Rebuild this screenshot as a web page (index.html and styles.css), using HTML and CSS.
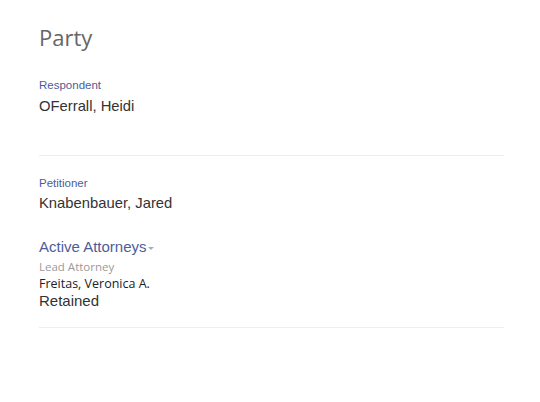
FILE: index.html
```html
<!DOCTYPE html>
<html>
<head>
<meta charset="utf-8">
<link rel="stylesheet" href="styles.css">
</head>
<body>
<div class="page">
  <h1 class="title">Party</h1>
  <section class="party party-first">
    <div class="role">Respondent</div>
    <div class="name">OFerrall, Heidi</div>
  </section>
  <section class="party party-second">
    <div class="role">Petitioner</div>
    <div class="name">Knabenbauer, Jared</div>
    <div class="attorneys">
      <div class="att-toggle">Active Attorneys<span class="caret"></span></div>
      <div class="att-label">Lead Attorney</div>
      <div class="att-name">Freitas, Veronica A.</div>
      <div class="att-type">Retained</div>
    </div>
  </section>
</div>
</body>
</html>
```
FILE: styles.css
```css
html, body { margin: 0; padding: 0; background: #fff; }
.page { padding: 22px 36px 0 39px; font-family: "Liberation Sans", Arial, sans-serif; }
.title { margin: 0; font-family: "Open Sans", sans-serif; font-weight: 400; font-size: 22px; line-height: 30px; color: #666; }
.party { border-bottom: 1px solid #eee; }
.party-first { padding-top: 26px; padding-bottom: 39px; }
.party-second { padding-top: 20px; padding-bottom: 18px; }
.role { font-size: 11.5px; line-height: 14px; color: #4d5c99; }
.name { font-size: 14.8px; line-height: 20px; margin-top: 4px; color: #333; }
.party-second .name { margin-top: 3px; }
.attorneys { margin-top: 24px; }
.att-toggle { font-size: 15px; line-height: 20px; color: #4d5c99; }
.caret { display: inline-block; width: 0; height: 0; border-left: 3px solid transparent; border-right: 3px solid transparent; border-top: 3px solid #a8acc0; margin-left: 1px; vertical-align: middle; }
.att-label { font-family: "Open Sans", sans-serif; font-size: 11.5px; line-height: 15px; color: #9a9a9a; margin-top: 2px; }
.att-name { font-family: "Open Sans", sans-serif; font-size: 12.5px; line-height: 16px; color: #222; margin-top: 2px; }
.att-type { font-size: 15px; line-height: 17px; color: #333; }
```
